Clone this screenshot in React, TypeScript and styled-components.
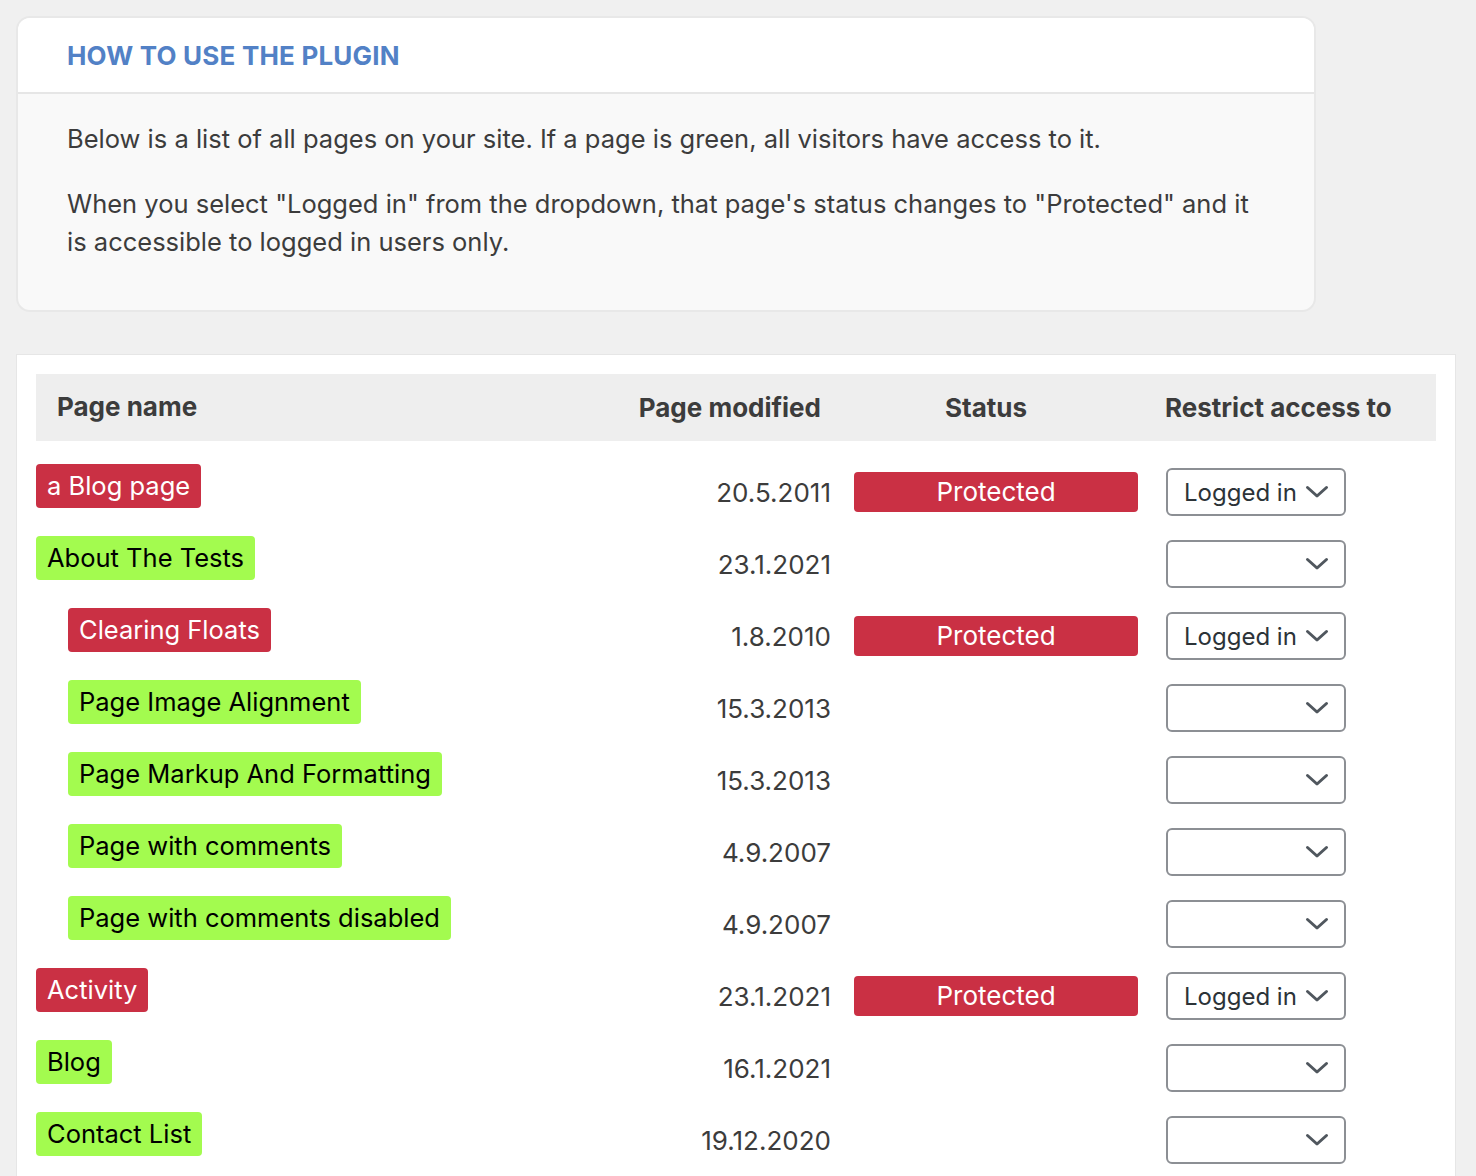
import styled, { createGlobalStyle } from "styled-components";

const GlobalStyle = createGlobalStyle`
  html, body {
    margin: 0;
    padding: 0;
    background: #f0f0f0;
    font-family: Inter, "Noto Sans", "Liberation Sans", sans-serif;
    color: #3c3c3c;
  }
`;

type Page = {
  name: string;
  modified: string;
  isProtected: boolean;
  child?: boolean;
};

const pages: Page[] = [
  { name: "a Blog page", modified: "20.5.2011", isProtected: true },
  { name: "About The Tests", modified: "23.1.2021", isProtected: false },
  { name: "Clearing Floats", modified: "1.8.2010", isProtected: true, child: true },
  { name: "Page Image Alignment", modified: "15.3.2013", isProtected: false, child: true },
  { name: "Page Markup And Formatting", modified: "15.3.2013", isProtected: false, child: true },
  { name: "Page with comments", modified: "4.9.2007", isProtected: false, child: true },
  { name: "Page with comments disabled", modified: "4.9.2007", isProtected: false, child: true },
  { name: "Activity", modified: "23.1.2021", isProtected: true },
  { name: "Blog", modified: "16.1.2021", isProtected: false },
  { name: "Contact List", modified: "19.12.2020", isProtected: false },
];

const Wrap = styled.div`
  padding: 16px 20px 0 16px;
`;

//------使用说明--------
const HelpCard = styled.section`
  width: 1300px;
  box-sizing: border-box;
  border: 2px solid #e8e8e8;
  border-radius: 14px;
  overflow: hidden;
  background: #f9f9f9;
`;
const HelpHead = styled.div`
  background: #fff;
  height: 76px;
  border-bottom: 2px solid #e6e6e6;
  box-sizing: border-box;
  padding-left: 49px;
  display: flex;
  align-items: center;
  h2 {
    margin: 0;
    font-size: 26px;
    font-weight: 700;
    color: #5281c6;
    letter-spacing: 0.2px;
  }
`;
const HelpBody = styled.div`
  padding: 26px 48px 49px 49px;
  p {
    margin: 0 0 27px;
    font-size: 25.5px;
    line-height: 38px;
    color: #3c3c3c;
  }
  p:last-child {
    margin-bottom: 0;
  }
`;

//------页面列表-------
const ListCard = styled.section`
  margin-top: 42px;
  width: 1440px;
  box-sizing: border-box;
  background: #fff;
  border: 1px solid #e6e6e6;
  border-bottom: none;
  padding: 19px 19px 0;
`;
const Grid = styled.div`
  display: grid;
  grid-template-columns: 564px 244px 304px 288px;
`;
const HeadRow = styled(Grid)`
  height: 67px;
  background: #eeeeee;
  margin-bottom: 15px;
  align-items: center;
`;
const HeadCell = styled.div<{ $align?: "left" | "right" | "center" }>`
  font-size: 26px;
  font-weight: 700;
  color: #3c3c3c;
  text-align: ${(p) => p.$align || "left"};
  &:nth-child(1) {
    padding-left: 21px;
    margin-top: -3px;
  }
  &:nth-child(2) {
    padding-right: 23px;
  }
  &:nth-child(3) {
    padding-right: 20px;
  }
  &:nth-child(4) {
    padding-left: 17px;
  }
`;
const Row = styled(Grid)`
  height: 72px;
  align-items: center;
`;
const NameCell = styled.div<{ $child?: boolean }>`
  align-self: start;
  padding-top: 8px;
  padding-left: ${(p) => (p.$child ? "32px" : "0")};
`;
const PageLabel = styled.span<{ $protected: boolean }>`
  display: inline-block;
  height: 44px;
  line-height: 44px;
  padding: 0 11px;
  border-radius: 4px;
  font-size: 25.5px;
  background: ${(p) => (p.$protected ? "#ca3044" : "#a3fb4f")};
  color: ${(p) => (p.$protected ? "#fff" : "#000")};
`;
const DateCell = styled.div`
  text-align: right;
  padding-right: 13px;
  font-size: 26px;
  color: #3c3c3c;
`;
const StatusCell = styled.div`
  padding: 0 10px;
`;
const Badge = styled.div`
  height: 40px;
  line-height: 40px;
  border-radius: 4px;
  background: #ca3044;
  color: #fff;
  text-align: center;
  font-size: 26px;
`;
const AccessCell = styled.div`
  padding-left: 18px;
`;
const Select = styled.div`
  width: 180px;
  height: 48px;
  box-sizing: border-box;
  border: 2px solid #8c8f94;
  border-radius: 6px;
  background: #fff;
  display: flex;
  align-items: center;
  justify-content: space-between;
  padding: 0 15px 0 16px;
  font-size: 24px;
  color: #2c3338;
  svg {
    margin-left: auto;
    flex-shrink: 0;
  }
`;

const Chevron = () => (
  <svg width="24" height="14" viewBox="0 0 24 14">
    <polyline
      points="2.5,2.5 12,11 21.5,2.5"
      fill="none"
      stroke="#50575e"
      strokeWidth="3"
      strokeLinecap="round"
      strokeLinejoin="round"
    />
  </svg>
);

const App = () => {
  return (
    <Wrap>
      <GlobalStyle />
      <HelpCard>
        <HelpHead>
          <h2>HOW TO USE THE PLUGIN</h2>
        </HelpHead>
        <HelpBody>
          <p>
            Below is a list of all pages on your site. If a page is green, all
            visitors have access to it.
          </p>
          <p>
            When you select "Logged in" from the dropdown, that page's status
            changes to "Protected" and it is accessible to logged in users only.
          </p>
        </HelpBody>
      </HelpCard>
      <ListCard>
        <HeadRow>
          <HeadCell>Page name</HeadCell>
          <HeadCell $align="right">Page modified</HeadCell>
          <HeadCell $align="center">Status</HeadCell>
          <HeadCell>Restrict access to</HeadCell>
        </HeadRow>
        {pages.map((page, index) => (
          <Row key={index}>
            <NameCell $child={page.child}>
              <PageLabel $protected={page.isProtected}>{page.name}</PageLabel>
            </NameCell>
            <DateCell>{page.modified}</DateCell>
            <StatusCell>
              {page.isProtected && <Badge>Protected</Badge>}
            </StatusCell>
            <AccessCell>
              <Select>
                {page.isProtected && <span>Logged in</span>}
                <Chevron />
              </Select>
            </AccessCell>
          </Row>
        ))}
      </ListCard>
    </Wrap>
  );
};
export default App;
